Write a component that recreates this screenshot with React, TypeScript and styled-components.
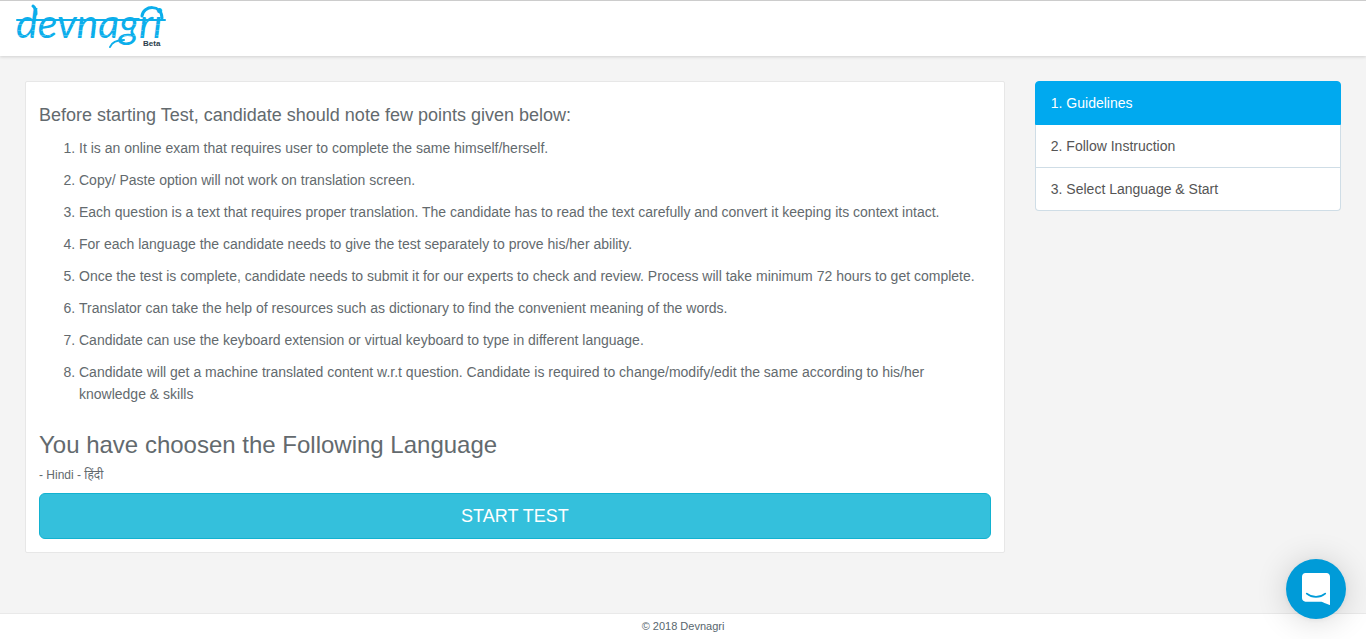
import React from "react";
import styled, { createGlobalStyle } from "styled-components";

const GlobalStyle = createGlobalStyle`
  *, *::before, *::after { box-sizing: border-box; }
  body {
    margin: 0;
    background: #f4f4f4;
    color: #636a6e;
    font-family: "Liberation Sans", Arial, "Noto Sans", sans-serif;
    font-size: 14px;
    line-height: 22px;
  }
`;

const Page = styled.div`
  display: flex;
  flex-direction: column;
  min-height: 100vh;
`;

const Header = styled.header`
  display: flex;
  height: 56px;
  padding: 0 14px;
  background: #fff;
  border-top: 1px solid #ccc;
  box-shadow: 0 1px 3px rgba(0, 0, 0, 0.15);
`;

const LogoLink = styled.a`
  display: block;
  line-height: 0;
`;

const Main = styled.main`
  display: grid;
  flex: 1;
  grid-template-columns: minmax(0, 16fr) minmax(0, 5fr);
  align-items: start;
  gap: 30px;
  padding: 25px;
`;

const Card = styled.section`
  padding: 13px;
  background: #fff;
  border: 1px solid #e7e7e7;
  border-radius: 2px;
`;

const Intro = styled.h2`
  margin: 10px 0 12px;
  font-size: 18px;
  font-weight: 400;
  line-height: 20px;
`;

const Rules = styled.ol`
  margin: 0;
  padding-left: 40px;
`;

const Rule = styled.li`
  margin-bottom: 10px;
`;

const LanguageTitle = styled.h1`
  margin: 27px 0 8px;
  font-size: 24px;
  font-weight: 400;
  line-height: 26px;
`;

const Language = styled.p`
  margin: 0 0 9px;
  font-size: 12px;
  line-height: 18px;
`;

const StartButton = styled.button`
  display: block;
  width: 100%;
  height: 46px;
  padding: 0 16px;
  background: #34c0dc;
  border: 1px solid #12b2d0;
  border-radius: 6px;
  color: #fff;
  font: inherit;
  font-size: 18px;
  cursor: pointer;
`;

const Steps = styled.nav`
  display: flex;
  flex-direction: column;
`;

const Step = styled.a<{ $active?: boolean }>`
  padding: 10px 15px;
  background: ${(p) => (p.$active ? "#00a9ef" : "#fff")};
  border: 1px solid ${(p) => (p.$active ? "#00a9ef" : "#cfdde6")};
  color: ${(p) => (p.$active ? "#fff" : "#555")};
  text-decoration: none;

  & + & { border-top: 0; }
  &:first-child { border-radius: 4px 4px 0 0; }
  &:last-child { border-radius: 0 0 4px 4px; }
`;

const Footer = styled.footer`
  padding: 1px 0 2px;
  background: #fff;
  border-top: 1px solid #e9e9e9;
  color: #58666e;
  font-size: 11px;
  text-align: center;
`;

const ChatButton = styled.button`
  position: fixed;
  right: 20px;
  bottom: 20px;
  display: flex;
  align-items: center;
  justify-content: center;
  width: 60px;
  height: 60px;
  padding: 0;
  background: #009bd8;
  border: 0;
  border-radius: 50%;
  box-shadow: 0 1px 6px rgba(0, 0, 0, 0.06), 0 2px 32px rgba(0, 0, 0, 0.16);
  cursor: pointer;
`;

const rules = [
  "It is an online exam that requires user to complete the same himself/herself.",
  "Copy/ Paste option will not work on translation screen.",
  "Each question is a text that requires proper translation. The candidate has to read the text carefully and convert it keeping its context intact.",
  "For each language the candidate needs to give the test separately to prove his/her ability.",
  "Once the test is complete, candidate needs to submit it for our experts to check and review. Process will take minimum 72 hours to get complete.",
  "Translator can take the help of resources such as dictionary to find the convenient meaning of the words.",
  "Candidate can use the keyboard extension or virtual keyboard to type in different language.",
  "Candidate will get a machine translated content w.r.t question. Candidate is required to change/modify/edit the same according to his/her knowledge & skills",
];

const steps = ["1. Guidelines", "2. Follow Instruction", "3. Select Language & Start"];

// Wordmark hung from a Devanagari-style headline, with swashes above and below.
function Logo() {
  return (
    <svg width="154" height="50" viewBox="14 1 154 50" role="img" aria-label="Devnagri Beta">
      <text x="16" y="38" fill="#0caeeb" fontFamily="Lato, sans-serif" fontStyle="italic" fontSize="41">
        devnagri
      </text>
      <g fill="none" stroke="#0caeeb" strokeLinecap="round" strokeLinejoin="round">
        <path d="M17 20H165" strokeWidth="2" />
        <path d="M33 6Q36 8 36 14" strokeWidth="3" />
        <path d="M142 16C143 5 162 4 162 18" strokeWidth="3" />
        <path d="M110 47C112 42 117 40 124 40" strokeWidth="2" />
      </g>
      <path
        d="M18 24.500h146M18 30.500h146M18 35.500h146"
        stroke="#fff"
        strokeWidth="1"
        strokeDasharray="5 3 2 4 7 2"
        opacity="0.25"
      />
      <text x="143" y="46" fill="#2c3e4c" fontFamily="Liberation Sans, sans-serif" fontWeight="700" fontSize="8">
        Beta
      </text>
    </svg>
  );
}

export default function App() {
  return (
    <>
      <GlobalStyle />
      <Page>
        <Header>
          <LogoLink href="#">
            <Logo />
          </LogoLink>
        </Header>
        <Main>
          <Card>
            <Intro>Before starting Test, candidate should note few points given below:</Intro>
            <Rules>
              {rules.map((rule) => (
                <Rule key={rule}>{rule}</Rule>
              ))}
            </Rules>
            <LanguageTitle>You have choosen the Following Language</LanguageTitle>
            <Language>- Hindi - हिंदी</Language>
            <StartButton type="button">START TEST</StartButton>
          </Card>
          <Steps aria-label="Test steps">
            {steps.map((step, i) => (
              <Step key={step} href="#" $active={i === 0} aria-current={i === 0 ? "step" : undefined}>
                {step}
              </Step>
            ))}
          </Steps>
        </Main>
        <Footer>© 2018 Devnagri</Footer>
      </Page>
      <ChatButton type="button" aria-label="Open chat">
        <svg width="28" height="32" viewBox="0 0 28 32" aria-hidden="true">
          <path
            d="M28 32s-4.714-1.855-8.527-3.340H3.437C1.540 28.660 0 27.026 0 25.013V3.644C0 1.633 1.540 0 3.437 0h21.125C26.460 0 28 1.633 28 3.644V32z"
            fill="#fff"
          />
          <path d="M4.800 20.600C10.200 25 17.800 25 23.200 20.600" fill="none" stroke="#009bd8" strokeWidth="1.800" strokeLinecap="round" />
        </svg>
      </ChatButton>
    </>
  );
}
